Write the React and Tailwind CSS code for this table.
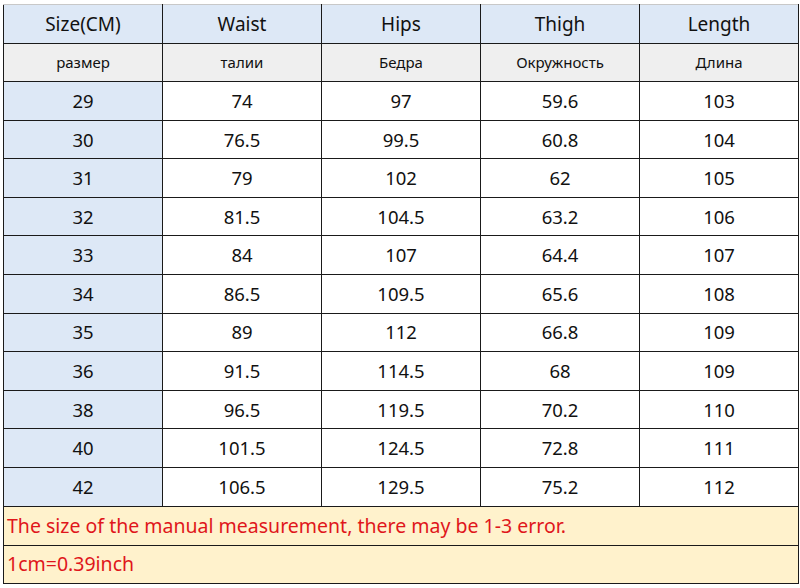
import React from 'react';

const headers = ['Size(CM)', 'Waist', 'Hips', 'Thigh', 'Length'];
const subHeaders = ['размер', 'талии', 'Бедра', 'Окружность', 'Длина'];

const rows = [
    ['29', '74', '97', '59.6', '103'],
    ['30', '76.5', '99.5', '60.8', '104'],
    ['31', '79', '102', '62', '105'],
    ['32', '81.5', '104.5', '63.2', '106'],
    ['33', '84', '107', '64.4', '107'],
    ['34', '86.5', '109.5', '65.6', '108'],
    ['35', '89', '112', '66.8', '109'],
    ['36', '91.5', '114.5', '68', '109'],
    ['38', '96.5', '119.5', '70.2', '110'],
    ['40', '101.5', '124.5', '72.8', '111'],
    ['42', '106.5', '129.5', '75.2', '112'],
];

const cell = 'border-[1.5px] border-[#1a1a1a] text-center align-middle p-0';

const App = () => {
    return (
        <div className="w-[800px] h-[588px] bg-white pt-1 pl-[3px] font-['Noto_Sans','Open_Sans',sans-serif] text-[#111]">
            <table className="w-[795px] border-collapse table-fixed">
                <colgroup>
                    <col className="w-[159px]" />
                    <col className="w-[159px]" />
                    <col className="w-[159px]" />
                    <col className="w-[159px]" />
                    <col className="w-[159px]" />
                </colgroup>
                <tbody>
                    {/* ─── Header ─── */}
                    <tr className="h-[39px] bg-[#dde8f6]">
                        {headers.map((h) => (
                            <td key={h} className={`${cell} border-t-[#c8c8c8] text-[19px]`}>{h}</td>
                        ))}
                    </tr>
                    <tr className="h-[38px] bg-[#efefef]">
                        {subHeaders.map((h) => (
                            <td key={h} className={`${cell} text-[15px]`}>{h}</td>
                        ))}
                    </tr>

                    {/* ─── Data ─── */}
                    {rows.map((r) => (
                        <tr key={r[0]} className="h-[38.6px]">
                            {r.map((v, i) => (
                                <td key={i} className={`${cell} text-[18.5px] ${i === 0 ? 'bg-[#dde8f6]' : 'bg-white'}`}>{v}</td>
                            ))}
                        </tr>
                    ))}

                    {/* ─── Notes ─── */}
                    <tr className="h-[39px] bg-[#fff2cc]">
                        <td colSpan={5} className="border-[1.5px] border-[#1a1a1a] text-left pl-[3px] text-[19.5px] text-[#e0161b]">
                            The size of the manual measurement, there may be 1-3 error.
                        </td>
                    </tr>
                    <tr className="h-[38px] bg-[#fff2cc]">
                        <td colSpan={5} className="border-[1.5px] border-[#1a1a1a] text-left pl-[3px] text-[19.5px] text-[#e0161b]">
                            1cm=0.39inch
                        </td>
                    </tr>
                </tbody>
            </table>
        </div>
    );
};

export default App;
